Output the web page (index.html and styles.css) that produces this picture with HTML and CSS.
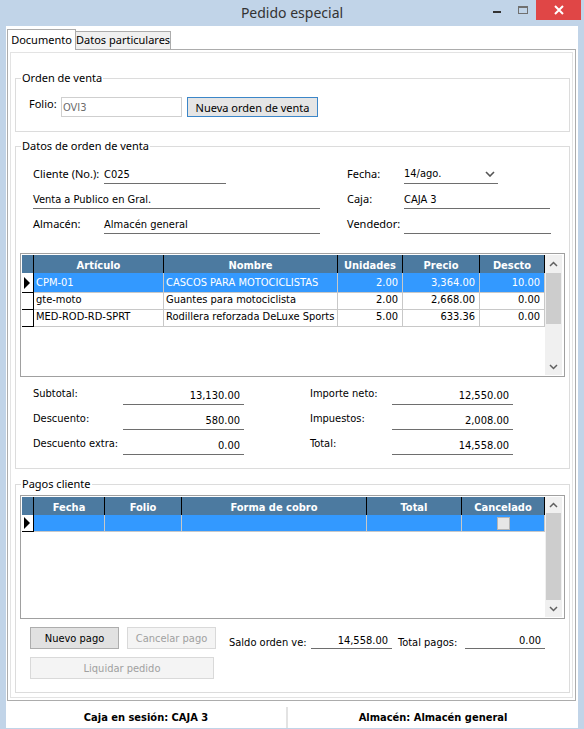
FILE: index.html
```html
<!DOCTYPE html>
<html lang="es">
<head>
  <meta charset="UTF-8">
  <title>Pedido especial</title>
  <link rel="stylesheet" href="styles.css">
</head>
<body>
<div class="window">

  <div class="titlebar">
    <span class="title">Pedido especial</span>
    <div class="caption">
      <span class="cap-btn"><svg width="10" height="10" viewBox="0 0 10 10"><rect x="1" y="6" width="8" height="2" fill="#333"/></svg></span>
      <span class="cap-btn"><svg width="12" height="10" viewBox="0 0 12 10"><rect x="1.5" y="1.5" width="9" height="7" fill="none" stroke="#707070"/><rect x="1" y="1" width="10" height="2" fill="#707070"/></svg></span>
      <span class="cap-btn close"><svg width="10" height="10" viewBox="0 0 10 10"><path d="M1 1 L9 9 M9 1 L1 9" stroke="#fff" stroke-width="2"/></svg></span>
    </div>
  </div>

  <div class="client">
    <div class="tabs">
      <div class="tab active">Documento</div>
      <div class="tab">Datos particulares</div>
    </div>

    <div class="tab-control">
      <div class="tab-page">

        <fieldset class="group orden">
          <legend>Orden de venta</legend>
          <div class="folio-row">
            <span class="lbl folio-lbl">Folio:</span>
            <div class="textbox">OVI3</div>
            <button class="btn focused">Nueva orden de venta</button>
          </div>
        </fieldset>

        <fieldset class="group datos">
          <legend>Datos de orden de venta</legend>
          <div class="hdr-fields">
            <span class="lbl">Cliente (No.):</span>
            <span class="uline w122">C025</span>
            <span></span>
            <span class="lbl">Fecha:</span>
            <span class="uline date">14/ago.
              <svg width="10" height="6" viewBox="0 0 10 6"><path d="M1 1 L5 5 L9 1" fill="none" stroke="#555" stroke-width="1.6"/></svg>
            </span>

            <span class="uline span2">Venta a Publico en Gral.</span>
            <span></span>
            <span class="lbl">Caja:</span>
            <span class="uline w146">CAJA 3</span>

            <span class="lbl">Almacén:</span>
            <span class="uline">Almacén general</span>
            <span></span>
            <span class="lbl">Vendedor:</span>
            <span class="uline"></span>
          </div>

          <div class="dgv">
            <div class="dgv-body art">
              <div class="dgv-row head">
                <span class="c rh"></span><span class="c">Artículo</span><span class="c">Nombre</span><span class="c">Unidades</span><span class="c">Precio</span><span class="c">Descto</span>
              </div>
              <div class="dgv-row sel">
                <span class="c rh"><i class="arrow"></i></span><span class="c">CPM-01</span><span class="c">CASCOS PARA MOTOCICLISTAS</span><span class="c num">2.00</span><span class="c num">3,364.00</span><span class="c num">10.00</span>
              </div>
              <div class="dgv-row">
                <span class="c rh"></span><span class="c">gte-moto</span><span class="c">Guantes para motociclista</span><span class="c num">2.00</span><span class="c num">2,668.00</span><span class="c num">0.00</span>
              </div>
              <div class="dgv-row">
                <span class="c rh"></span><span class="c">MED-ROD-RD-SPRT</span><span class="c">Rodillera reforzada DeLuxe Sports</span><span class="c num">5.00</span><span class="c num">633.36</span><span class="c num">0.00</span>
              </div>
            </div>
            <div class="vscroll">
              <span class="sb-btn up"><svg width="9" height="6" viewBox="0 0 9 6"><path d="M1 5 L4.5 1.5 L8 5" fill="none" stroke="#606060" stroke-width="1.5"/></svg></span>
              <span class="thumb t1"></span>
              <span class="track"></span>
              <span class="sb-btn"><svg width="9" height="6" viewBox="0 0 9 6"><path d="M1 1 L4.5 4.5 L8 1" fill="none" stroke="#606060" stroke-width="1.5"/></svg></span>
            </div>
          </div>

          <div class="totals">
            <span class="lbl t">Subtotal:</span>
            <span class="uline num">13,130.00</span>
            <span></span>
            <span class="lbl t">Importe neto:</span>
            <span class="uline num">12,550.00</span>

            <span class="lbl t">Descuento:</span>
            <span class="uline num">580.00</span>
            <span></span>
            <span class="lbl t">Impuestos:</span>
            <span class="uline num">2,008.00</span>

            <span class="lbl t">Descuento extra:</span>
            <span class="uline num">0.00</span>
            <span></span>
            <span class="lbl t">Total:</span>
            <span class="uline num">14,558.00</span>
          </div>
        </fieldset>

        <fieldset class="group pagos">
          <legend>Pagos cliente</legend>
          <div class="dgv">
            <div class="dgv-body pag">
              <div class="dgv-row head">
                <span class="c rh"></span><span class="c">Fecha</span><span class="c">Folio</span><span class="c">Forma de cobro</span><span class="c">Total</span><span class="c">Cancelado</span>
              </div>
              <div class="dgv-row sel">
                <span class="c rh"><i class="arrow"></i></span><span class="c"></span><span class="c"></span><span class="c"></span><span class="c"></span><span class="c chk"><i class="check"></i></span>
              </div>
            </div>
            <div class="vscroll">
              <span class="sb-btn up2"><svg width="9" height="6" viewBox="0 0 9 6"><path d="M1 5 L4.5 1.5 L8 5" fill="none" stroke="#606060" stroke-width="1.5"/></svg></span>
              <span class="thumb t2"></span>
              <span class="sb-btn"><svg width="9" height="6" viewBox="0 0 9 6"><path d="M1 1 L4.5 4.5 L8 1" fill="none" stroke="#606060" stroke-width="1.5"/></svg></span>
            </div>
          </div>

          <div class="pagos-bottom">
            <div class="btn-col">
              <div class="btn-row">
                <button class="btn w89">Nuevo pago</button>
                <button class="btn w89" disabled>Cancelar pago</button>
              </div>
              <button class="btn w184" disabled>Liquidar pedido</button>
            </div>
            <div class="saldo">
              <span class="lbl t s1">Saldo orden ve:</span>
              <span class="uline num w81">14,558.00</span>
              <span class="lbl t s2">Total pagos:</span>
              <span class="uline num w80">0.00</span>
            </div>
          </div>
        </fieldset>

      </div>
    </div>

    <div class="statusbar">
      <span class="panel left">Caja en sesión: CAJA 3</span>
      <span class="panel right">Almacén: Almacén general</span>
    </div>
  </div>

</div>
</body>
</html>
```

FILE: styles.css
```css
body {
  margin: 0;
  font-family: "Segoe UI", "Noto Sans", sans-serif;
  font-size: 11px;
  color: #000;
  background: #fff;
}

.window {
  width: 584px;
  height: 729px;
  background: #c1d4e8;
  display: flex;
  flex-direction: column;
  overflow: hidden;
}

/* barra de titulo */
.titlebar {
  height: 26px;
  flex-shrink: 0;
  display: flex;
}
.title {
  flex: 1;
  padding-left: 100px;
  text-align: center;
  font-size: 14px;
  line-height: 26px;
  color: #333;
}
.caption {
  width: 97px;
  margin-right: 3px;
  display: flex;
  align-items: flex-start;
}
.cap-btn {
  width: 26px;
  height: 20px;
  display: flex;
  align-items: center;
  justify-content: center;
}
.cap-btn.close {
  width: 45px;
  background: #e04646;
}

.client {
  flex: 1;
  margin: 0 6px 1px 6px;
  background: #fff;
  display: flex;
  flex-direction: column;
}

/* pestañas */
.tabs {
  height: 23px;
  display: flex;
  align-items: flex-end;
  padding-left: 1px;
}
.tab {
  box-sizing: border-box;
  height: 18px;
  width: 96px;
  margin-left: -1px;
  border: 1px solid #acacac;
  border-bottom: none;
  background: #f0f0f0;
  text-align: center;
  line-height: 16px;
  white-space: nowrap;
}
.tab.active {
  position: relative;
  z-index: 1;
  width: 69px;
  height: 21px;
  margin-left: 0;
  margin-bottom: -1px;
  padding-top: 2px;
  background: #fff;
}

.tab-control {
  box-sizing: border-box;
  height: 652px;
  margin: 0 2px 0 1px;
  border: 1px solid #acacac;
  padding: 2px;
}
.tab-page {
  box-sizing: border-box;
  height: 100%;
  border: 1px solid #e3e3e3;
  display: flex;
  flex-direction: column;
}

/* grupos */
.group {
  border: 1px solid #dcdcdc;
  margin: 0 2px 0 4px;
  padding: 0;
  min-width: 0;
}
.group legend {
  padding: 0 1px;
  margin-left: 5px;
  line-height: 16px;
}
.group.orden { margin-top: 17px; }
.group.datos { margin-top: 6px; padding-bottom: 13px; }
.group.pagos { margin-top: 7px; padding-bottom: 13px; }

.lbl {
  line-height: 17px;
  white-space: nowrap;
}
.lbl.t, .uline, .textbox, .btn, .dgv, .statusbar {
  font-family: Tahoma, "DejaVu Sans Condensed", "Liberation Sans", sans-serif;
  font-size: 11px;
}
.lbl.t { line-height: 16px; }

.folio-row {
  display: flex;
  margin-top: 11px;
  margin-bottom: 14px;
  padding-left: 13px;
  height: 20px;
}
.folio-lbl {
  width: 32px;
  line-height: 14px;
}
.textbox {
  box-sizing: border-box;
  width: 121px;
  height: 20px;
  border: 1px solid #cfcfcf;
  padding-left: 1px;
  line-height: 19px;
  color: #6d6d6d;
}

.btn {
  box-sizing: border-box;
  height: 22px;
  padding: 1px 0 0;
  border: 1px solid #adadad;
  background: #e1e1e1;
  color: #000;
}
.btn.focused {
  width: 131px;
  height: 20px;
  margin-left: 5px;
  border-color: #3c86c8;
  background: #e5e5e5;
  font-family: "Segoe UI", "Noto Sans", sans-serif;
  font-size: 11px;
}
.btn:disabled {
  background: #f4f4f4;
  border-color: #d9d9d9;
  color: #a0a0a0;
}
.w89 { width: 89px; }
.w184 { width: 184px; }

/* campos con linea inferior */
.uline {
  box-sizing: border-box;
  height: 19px;
  border-bottom: 1px solid #6e6e6e;
  line-height: 20px;
  white-space: nowrap;
}
.uline.num {
  text-align: right;
  padding-right: 4px;
}

.hdr-fields {
  display: grid;
  grid-template-columns: 71px 216px 27px 57px 147px;
  grid-auto-rows: 19px;
  row-gap: 6px;
  margin-top: 11px;
  padding-left: 17px;
}
.w122 { width: 122px; }
.w146 { width: 146px; }
.span2 { grid-column: 1 / 3; }
.uline.date {
  width: 94px;
  display: flex;
  justify-content: space-between;
  align-items: center;
  padding-right: 3px;
}

/* DataGridView */
.dgv {
  box-sizing: border-box;
  height: 124px;
  margin: 19px 4px 0 4px;
  border: 1px solid #a0a0a0;
  padding: 1px;
  display: flex;
  background: #fff;
}
.pagos .dgv { margin-top: 3px; }
.dgv-body { width: 523px; }
.dgv-row {
  display: grid;
  height: 17px;
}
.art .dgv-row { grid-template-columns: 12px 130px 174px 65px 77px 65px; }
.pag .dgv-row { grid-template-columns: 12px 71px 77px 185px 95px 83px; }
.c {
  box-sizing: border-box;
  padding: 0 2px;
  border-right: 1px solid #c8c8c8;
  border-bottom: 1px solid #c8c8c8;
  line-height: 19px;
  white-space: nowrap;
}
.c.num {
  text-align: right;
  padding-right: 4px;
}
.c.rh {
  border-right-color: #000;
  border-bottom-color: #000;
  padding: 0;
  display: flex;
  align-items: center;
  padding-left: 2px;
}
.dgv-row.head {
  height: 18px;
  background: #4c7aa0;
}
.head .c {
  border-bottom: none;
  border-right-color: #000;
  color: #fff;
  font-weight: bold;
  text-align: center;
  line-height: 21px;
}
.dgv-row.sel .c:not(.rh) {
  background: #3399ff;
  color: #fff;
}
.arrow {
  width: 0;
  height: 0;
  border-left: 6px solid #000;
  border-top: 6px solid transparent;
  border-bottom: 6px solid transparent;
}
.c.chk {
  display: flex;
  justify-content: center;
  align-items: center;
}
.check {
  box-sizing: border-box;
  width: 13px;
  height: 13px;
  border: 1px solid #b4b4b4;
  background: #e6e6e6;
}

.vscroll {
  width: 17px;
  display: flex;
  flex-direction: column;
  background: #f0f0f0;
}
.sb-btn {
  height: 17px;
  display: flex;
  align-items: center;
  justify-content: center;
  flex-shrink: 0;
}
.sb-btn.up { height: 18px; }
.sb-btn.up2 { height: 16px; }
.thumb {
  margin: 0 1px;
  background: #cdcdcd;
  flex-shrink: 0;
}
.thumb.t1 { height: 51px; }
.thumb.t2 { height: 87px; }
.track { flex: 1; }

/* totales */
.totals {
  display: grid;
  grid-template-columns: 90px 121px 66px 82px 121px;
  grid-auto-rows: 19px;
  row-gap: 6px;
  margin-top: 9px;
  padding-left: 17px;
}

/* pagos */
.pagos-bottom {
  display: flex;
  margin-top: 8px;
  padding-left: 14px;
}
.btn-col {
  width: 186px;
  display: flex;
  flex-direction: column;
  gap: 8px;
}
.btn-row {
  display: flex;
  gap: 8px;
}
.saldo {
  display: flex;
  height: 19px;
  margin-top: 3px;
  margin-left: 13px;
}
.saldo .lbl { line-height: 26px; }
.s1 { width: 82px; }
.s2 { width: 67px; margin-left: 6px; }
.w81 { width: 81px; }
.w80 { width: 80px; padding-right: 3px; }
.saldo .uline { line-height: 22px; }

/* barra de estado */
.statusbar {
  height: 21px;
  margin-top: 6px;
  display: flex;
  font-weight: bold;
  line-height: 21px;
}
.panel {
  text-align: center;
}
.panel.left {
  width: 280px;
  border-right: 2px solid #e3e3e3;
}
.panel.right {
  flex: 1;
}
```
